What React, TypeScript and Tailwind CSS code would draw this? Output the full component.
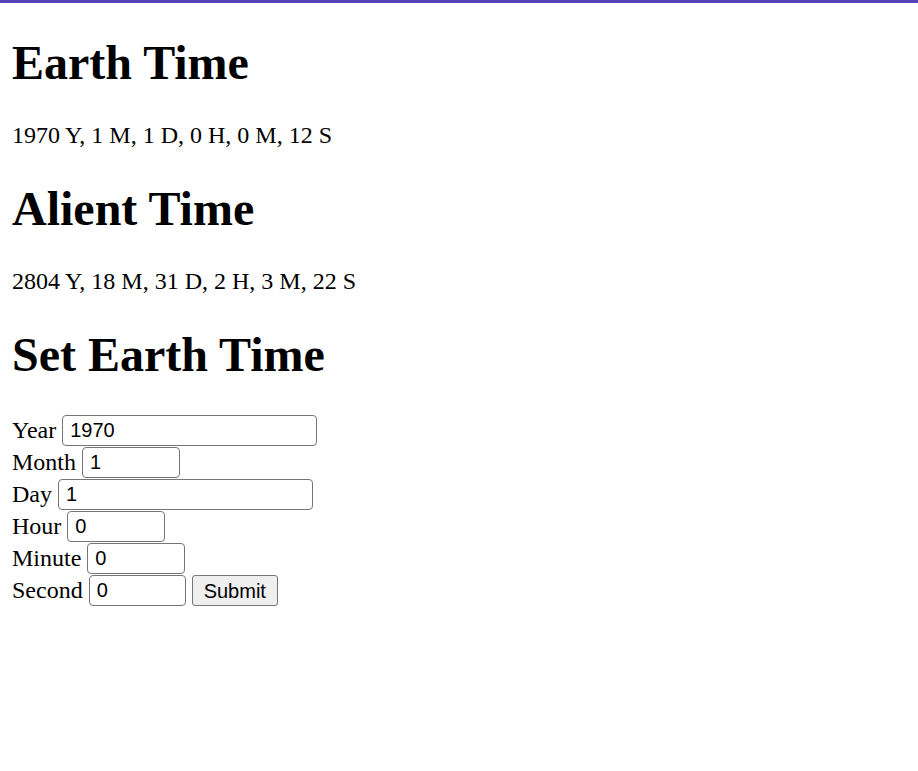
const fields = [
	{ label: 'Year', value: '1970', width: 'w-[255px]' },
	{ label: 'Month', value: '1', width: 'w-[98px]' },
	{ label: 'Day', value: '1', width: 'w-[255px]' },
	{ label: 'Hour', value: '0', width: 'w-[98px]' },
	{ label: 'Minute', value: '0', width: 'w-[98px]' },
	{ label: 'Second', value: '0', width: 'w-[97px]' },
];

export default function App() {
	return (
		<div className="min-h-[771px] border-t-[3px] border-[#5343b6] bg-white px-3 text-black font-['Liberation_Serif',serif]">
			<h1 className="mt-[32px] mb-[32px] text-[48px] font-bold leading-[55px]">Earth Time</h1>
			<p className="my-[24px] text-[24px] leading-[27px]">1970 Y, 1 M, 1 D, 0 H, 0 M, 12 S</p>
			<h1 className="mt-[32px] mb-[32px] text-[48px] font-bold leading-[55px]">Alient Time</h1>
			<p className="my-[24px] text-[24px] leading-[27px]">2804 Y, 18 M, 31 D, 2 H, 3 M, 22 S</p>
			<h1 className="mt-[32px] mb-[32px] text-[48px] font-bold leading-[55px]">Set Earth Time</h1>
			<form className="flex flex-col" onSubmit={e => e.preventDefault()}>
				{fields.map((field, i) => (
					<div className="flex h-[32px] items-center gap-[6px]" key={field.label}>
						<label className="text-[24px] leading-[27px]">{field.label}</label>
						<input
							className={`${field.width} h-[31px] rounded-[4px] border border-[#767676] px-[7px] text-[20px] font-['Liberation_Sans',sans-serif] text-black outline-none`}
							defaultValue={field.value}
						/>
						{i === fields.length - 1 && (
							<button
								className="h-[31px] rounded-[3px] border border-[#767676] bg-[#efefef] px-[11px] text-[20px] font-['Liberation_Sans',sans-serif] text-black"
								type="submit"
							>
								Submit
							</button>
						)}
					</div>
				))}
			</form>
		</div>
	);
}
